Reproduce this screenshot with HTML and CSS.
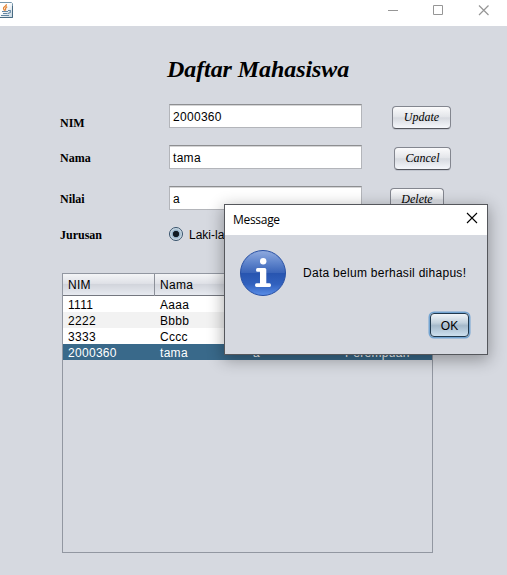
FILE: index.html
```
<!DOCTYPE html>
<html lang="id">
<head>
<meta charset="utf-8">
<title>Daftar Mahasiswa</title>
<link rel="stylesheet" href="styles.css">
</head>
<body>
<header class="titlebar">
  <svg class="java" width="13" height="16" viewBox="0 0 13 16">
    <defs><linearGradient id="jbg" x1="0" y1="0" x2="1" y2="1"><stop offset=".4" stop-color="#fff"/><stop offset="1" stop-color="#c4d4df"/></linearGradient></defs>
    <path d="M-1 .5H11.5L12.5 1.5V15.5H-1Z" fill="url(#jbg)" stroke="#7898ad"/>
    <path d="M0 15.5H12.5V4" fill="none" stroke="#496b83"/>
    <path d="M6.5 2.3C6.5 4.5 3 4.5 3.5 6.5C3.7 7.6 4.5 8 4.5 8.7M7.2 4.6C4.8 5.8 5.8 6.6 5.4 8.5" fill="none" stroke="#e48332" stroke-width="1.3"/>
    <path d="M2 9.5H8M3 11.5H7.5M1 13.5H9M8 8.5H10.3V10.5L8 11.5" fill="none" stroke="#6386a3" stroke-width="1.1"/>
  </svg>
  <svg class="controls" width="104" height="12" viewBox="0 0 104 12" fill="none" stroke="#969696">
    <path d="M1 5.5H11M46.5.5H55.5V9.5H46.5Z"/><path d="M92 .5L101.5 10M101.5 .5L92 10" stroke-width="1.2"/>
  </svg>
</header>
<main>
  <h1>Daftar Mahasiswa</h1>
  <form class="form">
    <div class="row first"><label>NIM</label><div class="field">2000360</div><button type="button" class="btn update">Update</button></div>
    <div class="row"><label>Nama</label><div class="field">tama</div><button type="button" class="btn cancel">Cancel</button></div>
    <div class="row"><label>Nilai</label><div class="field">a</div><button type="button" class="btn delete">Delete</button></div>
    <div class="row options"><label>Jurusan</label><span class="radio"></span><span>Laki-laki</span></div>
  </form>
  <section class="table">
    <div class="record head"><span>NIM</span><span>Nama</span><span></span><span></span></div>
    <div class="record"><span>1111</span><span>Aaaa</span></div>
    <div class="record alt"><span>2222</span><span>Bbbb</span></div>
    <div class="record"><span>3333</span><span>Cccc</span></div>
    <div class="record selected"><span>2000360</span><span>tama</span><span>a</span><span>Perempuan</span></div>
  </section>
</main>
<div class="dialog">
  <div class="dialog-title"><span>Message</span>
    <svg width="12" height="12" viewBox="0 0 12 12"><path d="M1 1L11 11M11 1L1 11" stroke="#000" stroke-width="1.1"/></svg>
  </div>
  <div class="message">
    <svg width="46" height="47" viewBox="0 0 46 47">
      <defs><linearGradient id="blue" x1="0" y1="0" x2="0" y2="1"><stop stop-color="#91abdf"/><stop offset=".25" stop-color="#6287cd"/><stop offset=".49" stop-color="#3b65b9"/><stop offset=".51" stop-color="#2855b0"/><stop offset=".75" stop-color="#3161be"/><stop offset="1" stop-color="#5a8ee8"/></linearGradient></defs>
      <circle cx="23" cy="23" r="22.5" fill="url(#blue)" stroke="#2850a4"/>
      <circle cx="23.2" cy="11.3" r="3.2" fill="#fff"/>
      <path d="M17.5 18H24.7Q26.3 18 26.3 19.6V33.3H29.5Q31 33.3 31 35.2T29.5 37H16.5Q15 37 15 35.2T16.5 33.3H20V21.8H17.5Q16 21.8 16 19.9T17.5 18Z" fill="#fff"/>
    </svg>
    <span>Data belum berhasil dihapus!</span>
  </div>
  <button type="button" class="ok">OK</button>
</div>
</body>
</html>
```

FILE: styles.css
```
* { box-sizing: border-box; }
body {
  margin: 0;
  width: 507px;
  height: 575px;
  overflow: hidden;
  background: #d6d9e0;
  color: #000;
  font: 12px/16px "Liberation Sans", Arial, sans-serif;
}
svg { display: block; flex: none; }
.titlebar { display: flex; justify-content: space-between; height: 26px; background: #fff; }
.java { margin-top: 2px; }
.controls { margin: 5px 16px 0 0; }
h1 {
  margin: 0 0 0 167px;
  padding-top: 29px;
  height: 78px;
  font: italic bold 24px/28px "Liberation Serif", "Times New Roman", serif;
  letter-spacing: -.08px;
  white-space: nowrap;
}
.form { padding-left: 60px; }
.row { display: flex; height: 41px; align-items: flex-start; }
label { width: 109px; padding-top: 5px; font: bold 12px/16px "Liberation Serif", "Times New Roman", serif; }
.first label { padding-top: 11px; }
.field {
  width: 193px;
  height: 24px;
  padding: 4px 3px;
  line-height: 16px;
  letter-spacing: .3px;
  background: #fff;
  border: 1px solid #b3b5ba;
  border-top-color: #8d8e91;
  box-shadow: inset 0 1px 0 #d5d5d6;
}
.btn {
  height: 23px;
  margin: 2px 0 0 30px;
  padding: 0 0 1px;
  border: 1px solid #83868f;
  border-bottom-color: #54565d;
  border-radius: 4px;
  background: linear-gradient(#fbfbfc, #e4e6ea 45%, #d7dae0 52%, #f5f7fb);
  box-shadow: 0 1px 0 #c0c4cd;
  font: italic 12px/20px "Liberation Serif", "Times New Roman", serif;
  color: #000;
}
.update { width: 59px; }
.cancel { width: 57px; margin-left: 32px; }
.delete { width: 54px; margin-left: 28px; }
.options { height: 46px; }
.options label { padding-top: 0; }
.options span { white-space: nowrap; }
.radio {
  width: 14px;
  height: 14px;
  margin-right: 6px;
  border: 1px solid #35516a;
  border-radius: 50%;
  background: radial-gradient(circle, #101a23 0 2.8px, #8ba9c0 3.5px, #dce8f0 6px);
}
.table {
  width: 371px;
  height: 280px;
  margin-left: 62px;
  border: 1px solid #9297a1;
}
.record { display: grid; grid-template-columns: 92px 93px 92px 92px; height: 16px; background: #fff; }
.record span { padding-left: 5px; line-height: 18px; letter-spacing: .3px; white-space: nowrap; }
.head { height: 22px; background: linear-gradient(#f4f5f7, #dfe1e7 45%, #d2d5dc 50%, #e7eaf0); border-bottom: 1px solid #74777f; }
.head span { line-height: 22px; border-right: 1px solid #8c9099; }
.head span:last-child { border-right: 0; }
.alt { background: #f2f2f2; }
.selected { background: #39698a; color: #fff; }
.dialog {
  position: absolute;
  left: 224px;
  top: 204px;
  width: 264px;
  height: 151px;
  border: 1px solid #55575c;
  background: #d6d9e0;
  box-shadow: 0 4px 15px 1px rgba(0, 0, 0, .32);
}
.dialog-title {
  display: flex;
  justify-content: space-between;
  height: 30px;
  padding: 7px 9px 0 8px;
  background: #fff;
  font: 12px/16px "Open Sans", sans-serif;
  letter-spacing: -.3px;
}
.message { display: flex; gap: 17px; padding: 15px 0 0 15px; white-space: nowrap; }
.message span { padding-top: 15px; letter-spacing: .28px; }
.ok {
  display: block;
  width: 39px;
  height: 24px;
  margin: 16px 0 0 205px;
  padding: 2px 0 0;
  border: 1px solid #20394e;
  border-radius: 4px;
  background: linear-gradient(#f1f5f8, #c2d1dd 40%, #a4b9ca 53%, #cde0ef);
  box-shadow: 0 0 0 1.5px #73a4d1;
  font: 12px/18px "Liberation Sans", Arial, sans-serif;
  color: #000;
}
```
